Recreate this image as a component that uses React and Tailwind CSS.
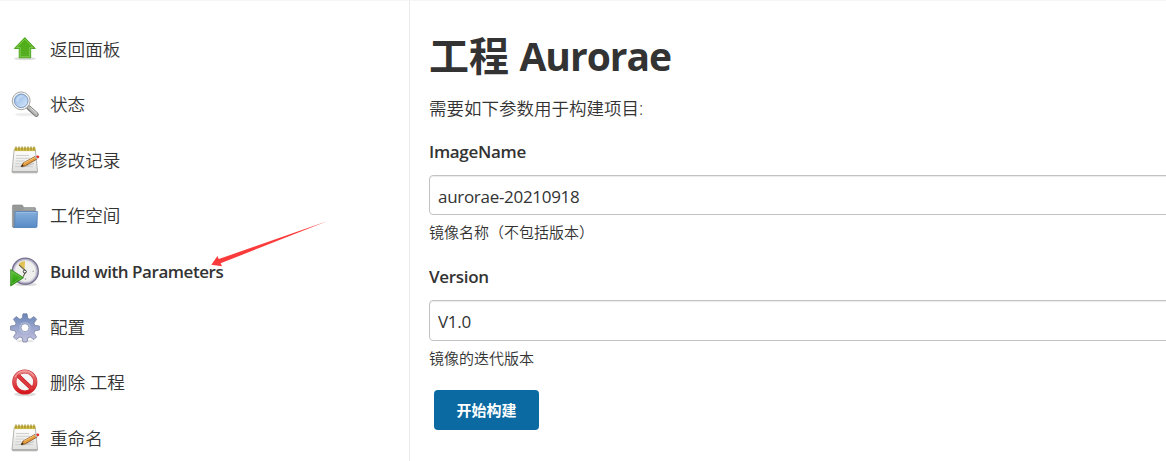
import { useId } from "react";

const menu = [
  { label: "返回面板", icon: UpIcon },
  { label: "状态", icon: SearchIcon },
  { label: "修改记录", icon: NotepadIcon },
  { label: "工作空间", icon: FolderIcon },
  { label: "Build with Parameters", icon: ClockIcon, active: true },
  { label: "配置", icon: GearIcon },
  { label: "删除 工程", icon: StopIcon },
  { label: "重命名", icon: NotepadIcon },
];

const params = [
  { name: "ImageName", value: "aurorae-20210918", help: "镜像名称（不包括版本）" },
  { name: "Version", value: "V1.0", help: "镜像的迭代版本" },
];

export default function App() {
  return (
    <div className="relative flex h-[461px] w-full overflow-hidden border-t border-[#f5f5f5] bg-white font-['Open_Sans','Noto_Sans_CJK_SC',sans-serif] text-[#333]">
      <aside className="w-[410px] shrink-0 border-r border-[#ebebeb] pt-[21px]">
        <nav>
          {menu.map((item) => (
            <MenuItem key={item.label} {...item} />
          ))}
        </nav>
      </aside>

      <main className="min-w-0 flex-1 pl-[19px]">
        <h1 className="mt-[31px] h-12 text-[40px] leading-[48px] font-bold whitespace-nowrap">
          工程 <span className="text-[39px] tracking-[-1px]">Aurorae</span>
        </h1>
        <p className="mt-4 h-6 text-[17.5px] leading-6 font-[350]">
          需要如下参数用于构建项目:
        </p>

        <form onSubmit={(e) => e.preventDefault()}>
          {params.map((p) => (
            <Field key={p.name} {...p} />
          ))}
          <button
            type="submit"
            className="mt-[19.2px] ml-[5px] flex h-10 w-[105px] items-center justify-center rounded bg-[#0b6aa2] text-[15px] font-bold text-white"
          >
            开始构建
          </button>
        </form>
      </main>

      <svg
        className="pointer-events-none absolute top-[219px] left-[210px]"
        width="120"
        height="50"
        viewBox="210 220 120 50"
      >
        <path d="M211.3 264.8 217.5 256l1.2 3.1L327 221.3 220.6 263.3l1.5 3Z" fill="#fb3b3b" />
      </svg>
    </div>
  );
}

function MenuItem({ label, icon: Icon, active }) {
  return (
    <a href="#" className="flex h-[55.6px] items-center pl-[10px]">
      <Icon />
      <span
        className={
          active
            ? "ml-[10px] text-[17px] font-semibold tracking-[-0.45px] whitespace-nowrap"
            : "mb-[2px] ml-[10px] text-[17.6px] font-[350] whitespace-nowrap"
        }
      >
        {label}
      </span>
    </a>
  );
}

function Field({ name, value, help }) {
  return (
    <div className="pt-5 pb-[3px]">
      <label className="block h-6 text-[17px] leading-6 font-semibold tracking-[-0.3px]">{name}</label>
      <input
        defaultValue={value}
        className="mt-[11px] block h-[40.4px] w-[calc(100%+4px)] rounded border border-[#c3c3c3] bg-white px-2 pt-[2px] text-[17px] tracking-[-0.3px] shadow-[inset_0_1px_1px_rgba(0,0,0,0.08)] outline-none"
      />
      <div className="mt-[7px] h-5 text-[15px] leading-5 font-[350]">{help}</div>
    </div>
  );
}

function Icon({ children }) {
  return (
    <svg width="30" height="30" viewBox="0 0 30 30" className="shrink-0" aria-hidden="true">
      {children}
    </svg>
  );
}

function Gradient({ id, from, to, diagonal }) {
  return (
    <linearGradient id={id} x1="0" y1="0" x2={diagonal ? "1" : "0"} y2="1">
      <stop stopColor={from} />
      <stop offset="1" stopColor={to} />
    </linearGradient>
  );
}

function UpIcon() {
  const id = useId();
  return (
    <Icon>
      <Gradient id={id} from="#4faf16" to="#55ad22" />
      <ellipse cx="15" cy="23.6" rx="11" ry="1.7" fill="#ddd" />
      <path
        d="M14.8 2.6 25.3 13.5h-4.6v9.3H9.2v-9.3H4.3Z"
        fill={`url(#${id})`}
        stroke="#3f9a0b"
        strokeWidth=".8"
        strokeLinejoin="round"
      />
      <path d="M14.8 4.1 23 12.6h-3.3v9.200h-9.500v-9.200H6.600Z" fill="none" stroke="#8cd35d" strokeWidth=".8" />
    </Icon>
  );
}

function SearchIcon() {
  const id = useId();
  return (
    <Icon>
      <Gradient id={id} from="#8bb3e5" to="#d9eafb" diagonal />
      <ellipse cx="15" cy="24.5" rx="10" ry="1.8" fill="#eee" />
      <path d="m18.500 17.500 7.800 7" stroke="#777" strokeWidth="4.800" strokeLinecap="round" />
      <path d="m19 17.500 7.300 6.800" stroke="#b8b8b5" strokeWidth="3" strokeLinecap="round" />
      <path d="m20.500 17.700 6.300 5.700" stroke="#e5e5e2" />
      <circle cx="11.2" cy="10.8" r="8.9" fill="#f5f5f4" stroke="#a3a5a4" />
      <circle cx="11.2" cy="10.8" r="6.8" fill={`url(#${id})`} stroke="#6f90bb" strokeWidth=".9" />
      <path d="M6 10.500a5.200 5.200 0 0 1 8-4.300C10.500 6.500 8.500 8.500 8 12.500Z" fill="#fff" opacity=".35" />
    </Icon>
  );
}

function NotepadIcon() {
  const id = useId();
  return (
    <Icon>
      <Gradient id={id} from="#ffffff" to="#dededc" />
      <path
        d="M4.200 3.500h21.100l2.200 21.800c.1 1-.4 1.500-1.300 1.500H3.200c-.9 0-1.300-.6-1.200-1.500Z"
        fill={`url(#${id})`}
        stroke="#a2a2a0"
        strokeWidth=".8"
      />
      <path d="M2.200 25.800h25.200" stroke="#999" />
      <path d="M4.500 1.700h21v3.400h-21z" fill="#d5c34e" />
      <path d="M6 .5v4M9 .5v4M12 .5v4M15 .5v4M18 .5v4M21 .5v4M24 .5v4" stroke="#9c8828" strokeWidth="1.2" />
      <path d="M6 9.500h13M6 12.300h14M5.500 15h9M5.300 17.800h6M5 20.600h18" stroke="#c6c6c6" strokeWidth=".8" />
      <path d="m12 21.300 12-3.800" stroke="#bbb" />
      <path d="m11 20.700 2.200-3.700L25 10.500l2 2.600-11.700 6.700Z" fill="#e39b3c" stroke="#7e4912" strokeWidth=".8" />
      <path d="m14 17.200 10.800-5.800" stroke="#f6c879" />
      <path d="m11 20.700 1.300-2.300 1.400 1.600Z" fill="#222" />
      <path d="m24.400 10.800 2-.8 1.700 2-1.700 1.400Z" fill="#bbb" />
      <path d="m26 10 1.700-.5c1.200-.1 2.200 1.400 1.200 2.200l-1.300.9Z" fill="#e62b28" />
    </Icon>
  );
}

function FolderIcon() {
  const id = useId();
  return (
    <Icon>
      <Gradient id={id} from="#85afdc" to="#588bc6" />
      <path
        d="M2.400 25V4.100c0-.8.4-1.100 1.200-1.100h8c.8 0 1.200.5 1.400 1.100l.5 1.500h11c.8 0 1.100.4 1.100 1.100V25Z"
        fill="#969898"
        stroke="#858888"
        strokeWidth=".6"
      />
      <path d="M13.500 7h10.800" stroke="#b4b6b6" strokeWidth=".8" />
      <path d="M5 9.500h22.400l-.4 14.800c0 .8-.4 1.200-1.200 1.200H3.400c1-.5 1.300-1 1.300-2.100Z" fill={`url(#${id})`} stroke="#4f7db5" strokeWidth=".8" />
      <path d="M5.800 10.400h20.600" stroke="#a3c3e6" strokeWidth=".8" />
    </Icon>
  );
}

function ClockIcon() {
  const id = useId();
  return (
    <Icon>
      <Gradient id={id} from="#5bc338" to="#209300" />
      <ellipse cx="16" cy="27.500" rx="11" ry="1.600" fill="#ddd" />
      <circle cx="15.300" cy="14.200" r="12.800" fill="#f3f3f1" stroke="#77728f" strokeWidth="1.800" />
      <circle cx="15.300" cy="14.200" r="11.700" fill="none" stroke="#b5b1c8" strokeWidth="1.300" />
      <circle cx="15.300" cy="14.200" r="10.600" fill="#f0f0ee" stroke="#d5d5da" strokeWidth=".7" />
      <path d="M14.600 12.600 8.600 7.500c1.500-2.400 3.700-3.300 6.400-3.200Z" fill="#e2c254" />
      <path d="m9 7.800 6 5.600M15.800 14.500l-2.700 5.300" stroke="#66603f" strokeWidth="1.100" />
      <circle cx="14.800" cy="14.600" r="1.500" fill="#fff" stroke="#333" />
      <circle cx="23.200" cy="14.200" r=".8" fill="#aaa" />
      <circle cx="15.500" cy="22" r=".8" fill="#999" />
      <path d="M.7 12.500 13.500 20.700.7 29Z" fill={`url(#${id})`} stroke="#2a8212" strokeWidth=".8" />
      <path d="m1.800 14.500 9.600 6.200-9.600 6.200Z" fill="none" stroke="#79c95a" strokeWidth=".6" />
    </Icon>
  );
}

function GearIcon() {
  const id = useId();
  return (
    <Icon>
      <Gradient id={id} from="#6a86b8" to="#c6c3e0" />
      <ellipse cx="15" cy="28" rx="9" ry="1.500" fill="#e5e5e5" />
      <path
        d="M13 .8h4l.8 4.500 2.300 1 3.800-2.700 2.700 2.700-2.700 3.800 1 2.300 4.500.6v4l-4.500.8-1 2.300 2.700 3.800-2.700 2.700-3.800-2.700-2.300 1-.8 4h-4l-.8-4-2.300-1-3.800 2.700-2.700-2.700 2.700-3.800-1-2.300-4.500-.8v-4l4.500-.6 1-2.300-2.700-3.800 2.700-2.700 3.800 2.700 2.300-1Z"
        fill={`url(#${id})`}
        stroke="#7781a5"
        strokeWidth=".8"
        strokeLinejoin="round"
      />
      <circle cx="15" cy="14.700" r="5.800" fill="#c0c8e4" opacity=".6" />
      <circle cx="15" cy="14.700" r="4" fill="#fff" stroke="#7781a5" strokeWidth=".7" />
    </Icon>
  );
}

function StopIcon() {
  const id = useId();
  return (
    <Icon>
      <Gradient id={id} from="#e88082" to="#d6161c" />
      <ellipse cx="15" cy="26.300" rx="11" ry="1.900" fill="#ddd" />
      <circle cx="14.800" cy="14" r="10.500" fill="#f6f6f6" stroke="#c8363a" strokeWidth="4.200" />
      <path d="m7.400 7 14.800 14" stroke="#c31318" strokeWidth="4" />
      <circle cx="14.800" cy="14" r="10.500" fill="none" stroke={`url(#${id})`} strokeWidth="3.200" />
      <path d="m7.400 7 14.800 14" stroke="#dc3a3e" strokeWidth="3" />
      <path d="M5.200 9.200A10.500 10.500 0 0 1 23.800 8.200" fill="none" stroke="#f6b0b0" strokeWidth=".8" />
    </Icon>
  );
}
